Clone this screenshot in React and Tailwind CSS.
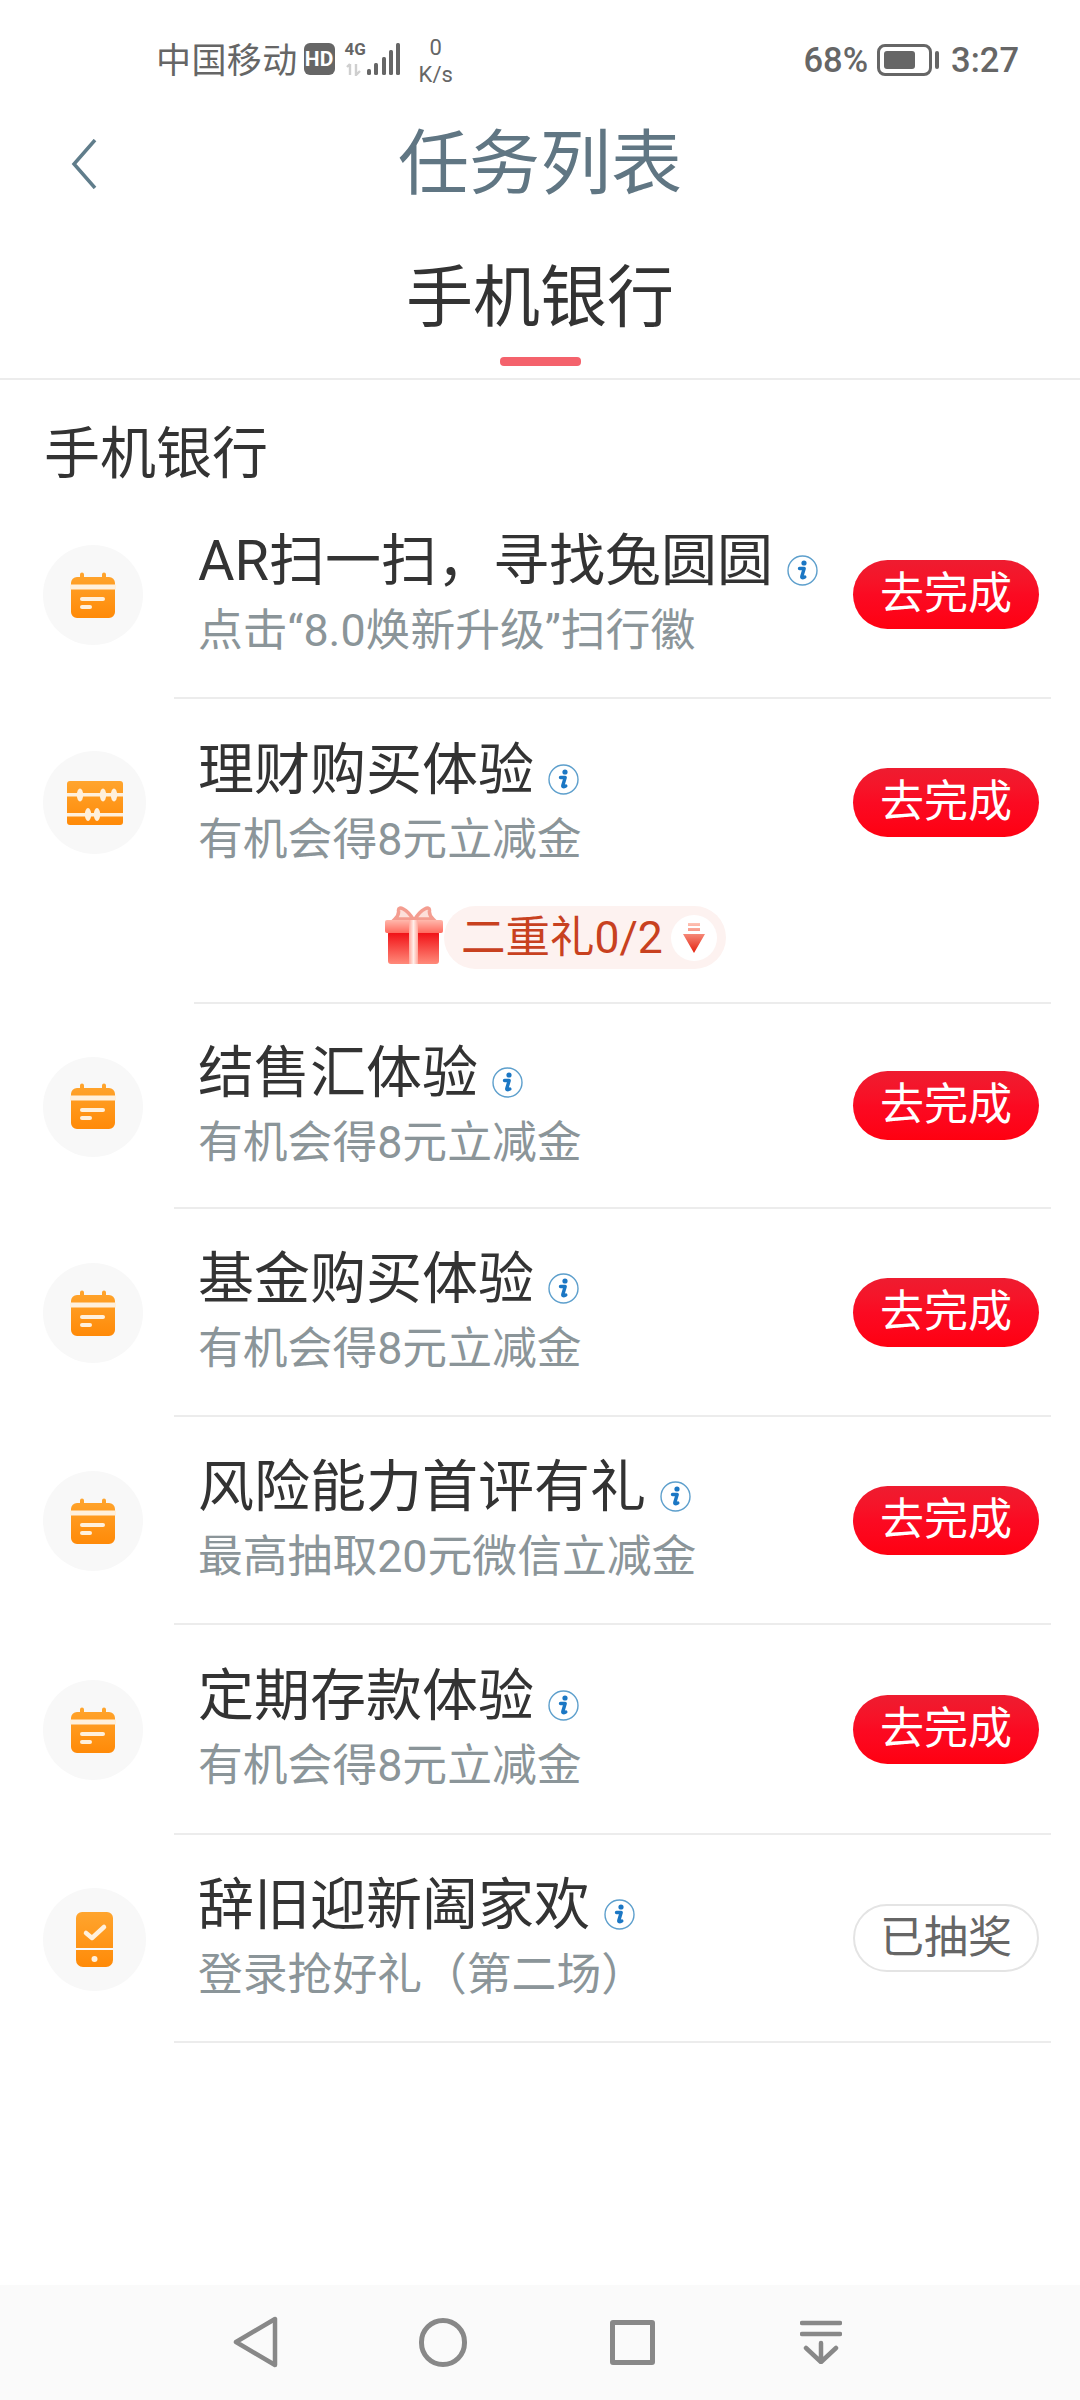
const OrangeGrad = ({ id }) => (
  <defs>
    <linearGradient id={id} x1="0" y1="0" x2="0" y2="1">
      <stop offset="0" stopColor="#ffa52e" />
      <stop offset="1" stopColor="#ff8a08" />
    </linearGradient>
  </defs>
);

const CalendarIcon = ({ id }) => (
  <svg width="46" height="47" viewBox="0 0 46 47">
    <OrangeGrad id={id} />
    <path
      d="M10 5 V2.5 a2 2 0 0 1 4 0 V5 H32 V2.5 a2 2 0 0 1 4 0 V5 H39 a6 6 0 0 1 6 6 V40 a6 6 0 0 1 -6 6 H7 a6 6 0 0 1 -6 -6 V11 a6 6 0 0 1 6 -6 Z"
      fill={`url(#${id})`}
    />
    <rect x="0" y="12.5" width="46" height="5" fill="#fff0dc" />
    <rect x="10" y="25" width="25" height="4" rx="2" fill="#fff0dc" />
    <rect x="10" y="33" width="12" height="4" rx="2" fill="#fff0dc" />
  </svg>
);

const AbacusIcon = ({ id }) => (
  <svg width="56" height="44" viewBox="0 0 56 44">
    <OrangeGrad id={id} />
    <rect width="56" height="44" rx="3" fill={`url(#${id})`} />
    <rect y="12" width="56" height="3.5" fill="#fff0dc" />
    <rect y="32" width="56" height="3.5" fill="#fff0dc" />
    <ellipse cx="13" cy="14" rx="3.2" ry="6.5" fill="#fff0dc" />
    <ellipse cx="36" cy="14" rx="3.2" ry="6.5" fill="#fff0dc" />
    <ellipse cx="47" cy="14" rx="3.2" ry="6.5" fill="#fff0dc" />
    <ellipse cx="21" cy="33.5" rx="3.2" ry="6.5" fill="#fff0dc" />
    <ellipse cx="30" cy="33.5" rx="3.2" ry="6.5" fill="#fff0dc" />
  </svg>
);

const PhoneIcon = ({ id }) => (
  <svg width="37" height="55" viewBox="0 0 37 55">
    <OrangeGrad id={id} />
    <path
      d="M6 0 H31 a6 6 0 0 1 6 6 V36 H0 V6 a6 6 0 0 1 6 -6 Z M0 38 H37 V48 a7 7 0 0 1 -7 7 H7 a7 7 0 0 1 -7 -7 Z"
      fill={`url(#${id})`}
    />
    <path d="M10 21 L16 26 L28 15" fill="none" stroke="#fff0dc" strokeWidth="4.5" strokeLinecap="round" strokeLinejoin="round" />
    <circle cx="18.5" cy="47" r="3" fill="#fff0dc" />
  </svg>
);

const InfoIcon = () => (
  <svg width="31" height="31" viewBox="0 0 31 31" className="ml-[14px] mt-[19px] shrink-0">
    <circle cx="15.5" cy="15.5" r="14.5" fill="#fff" stroke="#5d9fcc" strokeWidth="1.4" />
    <circle cx="17" cy="8" r="2.6" fill="#1b77c4" />
    <path d="M12.5 13.5 H17.2 L14.8 21.5 Q14.4 23.6 17.8 22" fill="none" stroke="#1b77c4" strokeWidth="3.4" strokeLinejoin="round" strokeLinecap="round" />
  </svg>
);

const GiftIcon = () => (
  <svg width="58" height="58" viewBox="0 0 58 58" className="shrink-0">
    <defs>
      <linearGradient id="giftBody" x1="0" y1="0" x2="0" y2="1">
        <stop offset="0" stopColor="#f00a10" />
        <stop offset="1" stopColor="#ff8a7a" />
      </linearGradient>
      <linearGradient id="giftLid" x1="0" y1="0" x2="0" y2="1">
        <stop offset="0" stopColor="#ffb8ac" />
        <stop offset="1" stopColor="#ff6a5e" />
      </linearGradient>
      <linearGradient id="giftRibbon" x1="0" y1="0" x2="1" y2="0">
        <stop offset="0" stopColor="#ffa89c" />
        <stop offset="0.5" stopColor="#ffeee9" />
        <stop offset="1" stopColor="#ffa89c" />
      </linearGradient>
    </defs>
    <path d="M28 13 C22 3 13 -1 13.5 4.5 C14 8 13 10 10 13 Z M30 13 C36 3 45 -1 44.5 4.5 C44 8 45 10 48 13 Z" fill="#fde0da" stroke="#f49d90" strokeWidth="3.5" />
    <rect x="3" y="25" width="51" height="33" rx="3" fill="url(#giftBody)" />
    <rect x="0" y="14" width="58" height="13" rx="2" fill="url(#giftLid)" />
    <rect x="24" y="14" width="9" height="44" fill="url(#giftRibbon)" />
  </svg>
);

const DownArrow = () => (
  <svg width="22" height="30" viewBox="0 0 22 30">
    <defs>
      <linearGradient id="arrowFill" x1="0" y1="0" x2="0" y2="1">
        <stop offset="0" stopColor="#ffc4b6" />
        <stop offset="1" stopColor="#e4200c" />
      </linearGradient>
    </defs>
    <path d="M5 0 H17 V3 H5 Z M5 5 H17 V8 H5 Z M0 11 H22 L11 30 Z" fill="url(#arrowFill)" />
  </svg>
);

const SignalIcon = () => (
  <svg width="55" height="33" viewBox="0 0 55 33" className="ml-[11px]">
    <rect x="21" y="26" width="4" height="6" rx="1.5" fill="#666" />
    <rect x="28" y="20" width="4" height="12" rx="1.5" fill="#666" />
    <rect x="36" y="14" width="4" height="18" rx="1.5" fill="#666" />
    <rect x="43" y="7" width="4" height="25" rx="1.5" fill="#666" />
    <rect x="50" y="0" width="4" height="32" rx="1.5" fill="#666" />
    <path d="M4 21 L1 24 M4 21 V32 M10 21 V32 L14 28" fill="none" stroke="#cfcfcf" strokeWidth="2.4" />
  </svg>
);

const BatteryIcon = () => (
  <div className="flex items-center ml-[9px]">
    <div className="w-[55px] h-[32px] rounded-[8px] border-[3px] border-[#666] p-[4px] pr-0 flex">
      <div className="w-[31px] h-full rounded-[3px] bg-[#666]" />
    </div>
    <div className="w-[4px] h-[18px] rounded-[2px] bg-[#666] ml-[3px]" />
  </div>
);

const StatusBar = () => (
  <div className="h-[118px] pl-[156px] pr-[61px] flex items-center justify-between text-[#666]">
    <div className="flex items-center">
      <span className="text-[35px] leading-[44px] tracking-[0.4px] pt-[5px]">中国移动</span>
      <span className="ml-[6px] w-[31px] h-[32px] rounded-[6px] bg-[#666] text-white text-[21px] leading-[32px] font-bold text-center">HD</span>
      <div className="relative">
        <span className="absolute left-[10px] top-[-3px] text-[17px] leading-[18px] font-bold">4G</span>
        <SignalIcon />
      </div>
      <div className="ml-[18px] flex flex-col items-center text-[22px] leading-[27px] mt-[4px]">
        <span>0</span>
        <span>K/s</span>
      </div>
    </div>
    <div className="flex items-center text-[34.5px] leading-[44px] font-medium pt-[2px]">
      <span>68%</span>
      <BatteryIcon />
      <span className="ml-[12px]">3:27</span>
    </div>
  </div>
);

const NavBar = () => (
  <div className="h-[115px] bg-[#fafafa] flex items-center justify-center pr-[5px] pb-[1px]">
    <div className="w-[189px] flex justify-center">
      <svg width="46" height="52" viewBox="0 0 46 52" fill="none" stroke="#888" strokeWidth="4.5" strokeLinejoin="round" className="ml-[3px]">
        <path d="M42 3 V49 L3 26 Z" />
      </svg>
    </div>
    <div className="w-[189px] flex justify-center">
      <div className="w-[48px] h-[49px] rounded-full border-[5px] border-[#888]" />
    </div>
    <div className="w-[189px] flex justify-center">
      <div className="w-[45px] h-[45px] rounded-[3px] border-[5px] border-[#888]" />
    </div>
    <div className="w-[189px] flex justify-center">
      <svg width="42" height="44" viewBox="0 0 42 44" fill="none" stroke="#888" strokeWidth="4.5" strokeLinecap="round" strokeLinejoin="round">
        <path d="M2 3 H40 M2 14 H40 M21 23 V42 M6 28 L21 42 L36 28" />
      </svg>
    </div>
  </div>
);

const tasks = [
  { title: "AR扫一扫，寻找兔圆圆", sub: "点击“8.0焕新升级”扫行徽", icon: CalendarIcon, h: "h-[208px]" },
  { title: "理财购买体验", sub: "有机会得8元立减金", icon: AbacusIcon, wide: true, gift: true, h: "h-[207px]" },
  { title: "结售汇体验", sub: "有机会得8元立减金", icon: CalendarIcon, h: "h-[205px]" },
  { title: "基金购买体验", sub: "有机会得8元立减金", icon: CalendarIcon, h: "h-[208px]" },
  { title: "风险能力首评有礼", sub: "最高抽取20元微信立减金", icon: CalendarIcon, h: "h-[208px]" },
  { title: "定期存款体验", sub: "有机会得8元立减金", icon: CalendarIcon, h: "h-[210px]" },
  { title: "辞旧迎新阖家欢", sub: "登录抢好礼（第二场）", icon: PhoneIcon, wide: true, done: true, h: "h-[208px]" },
];

const TaskRow = ({ task, index }) => {
  const Icon = task.icon;
  return (
    <>
      <div className={`flex ${task.h}`}>
        <div className="w-[174px] pl-[43px] flex items-center shrink-0">
          <div className={`${task.wide ? "w-[103px] h-[103px]" : "w-[100px] h-[100px]"} rounded-full bg-[#f8f8f8] flex items-center justify-center`}>
            <Icon id={`icon-grad-${index}`} />
          </div>
        </div>
        <div className={`flex-1 mr-[29px] pl-[24px] pr-[12px] flex items-center justify-between ${task.gift ? "" : "border-b-2 border-[#ececec]"}`}>
          <div className="flex flex-col">
            <div className="flex items-center text-[56px] leading-[72px] text-[#333]">
              <span>{task.title}</span>
              <InfoIcon />
            </div>
            <div className="mt-[2px] text-[44.8px] leading-[64px] text-[#8b9599]">{task.sub}</div>
          </div>
          {task.done ? (
            <div className="w-[186px] h-[68px] rounded-full border-2 border-[#e4e4e4] bg-white text-[#666] text-[44px] leading-[64px] text-center shrink-0">已抽奖</div>
          ) : (
            <div className="w-[186px] h-[69px] rounded-full bg-gradient-to-b from-[#ee1c30] via-[#fb0a22] to-[#ff0010] text-white text-[44px] leading-[68px] text-center shrink-0">去完成</div>
          )}
        </div>
      </div>
      {task.gift && (
        <div className="h-[98px] flex flex-col">
          <div className="pl-[385px] flex items-start">
            <GiftIcon />
            <div className="ml-[1px] w-[282px] h-[63px] rounded-full bg-[#fdf2f0] pl-[17px] flex items-center">
              <span className="text-[44.5px] leading-[66px] text-[#c8411f]">二重礼0/2</span>
              <div className="ml-[8px] w-[46px] h-[46px] rounded-full bg-white flex items-center justify-center">
                <DownArrow />
              </div>
            </div>
          </div>
          <div className="mt-auto ml-[194px] mr-[29px] h-[2px] bg-[#ececec]" />
        </div>
      )}
    </>
  );
};

export default function App() {
  return (
    <div className="w-[1080px] h-[2400px] bg-white flex flex-col font-['Roboto','Noto_Sans_CJK_SC',sans-serif]">
      <StatusBar />

      <div className="h-[92px] grid grid-cols-[1fr_auto_1fr] items-center">
        <div className="pl-[71px]">
          <svg width="26" height="50" viewBox="0 0 26 50" fill="none" stroke="#607d8b" strokeWidth="3.5">
            <path d="M24 1 L3 25 L24 49" />
          </svg>
        </div>
        <div className="text-[71px] leading-[90px] text-[#607683]">任务列表</div>
      </div>

      <div className="h-[170px] pt-[42px] flex flex-col items-center border-b-2 border-[#ececec]">
        <div className="text-[67px] leading-[92px] text-[#333]">手机银行</div>
        <div className="mt-[13px] w-[81px] h-[9px] rounded-[4px] bg-[#f4626c]" />
      </div>

      <div className="pt-[38px] pb-[1px] pl-[44px] text-[56px] leading-[72px] text-[#333]">手机银行</div>

      <div className="flex flex-col">
        {tasks.map((task, index) => (
          <TaskRow key={index} task={task} index={index} />
        ))}
      </div>

      <div className="mt-auto">
        <NavBar />
      </div>
    </div>
  );
}
